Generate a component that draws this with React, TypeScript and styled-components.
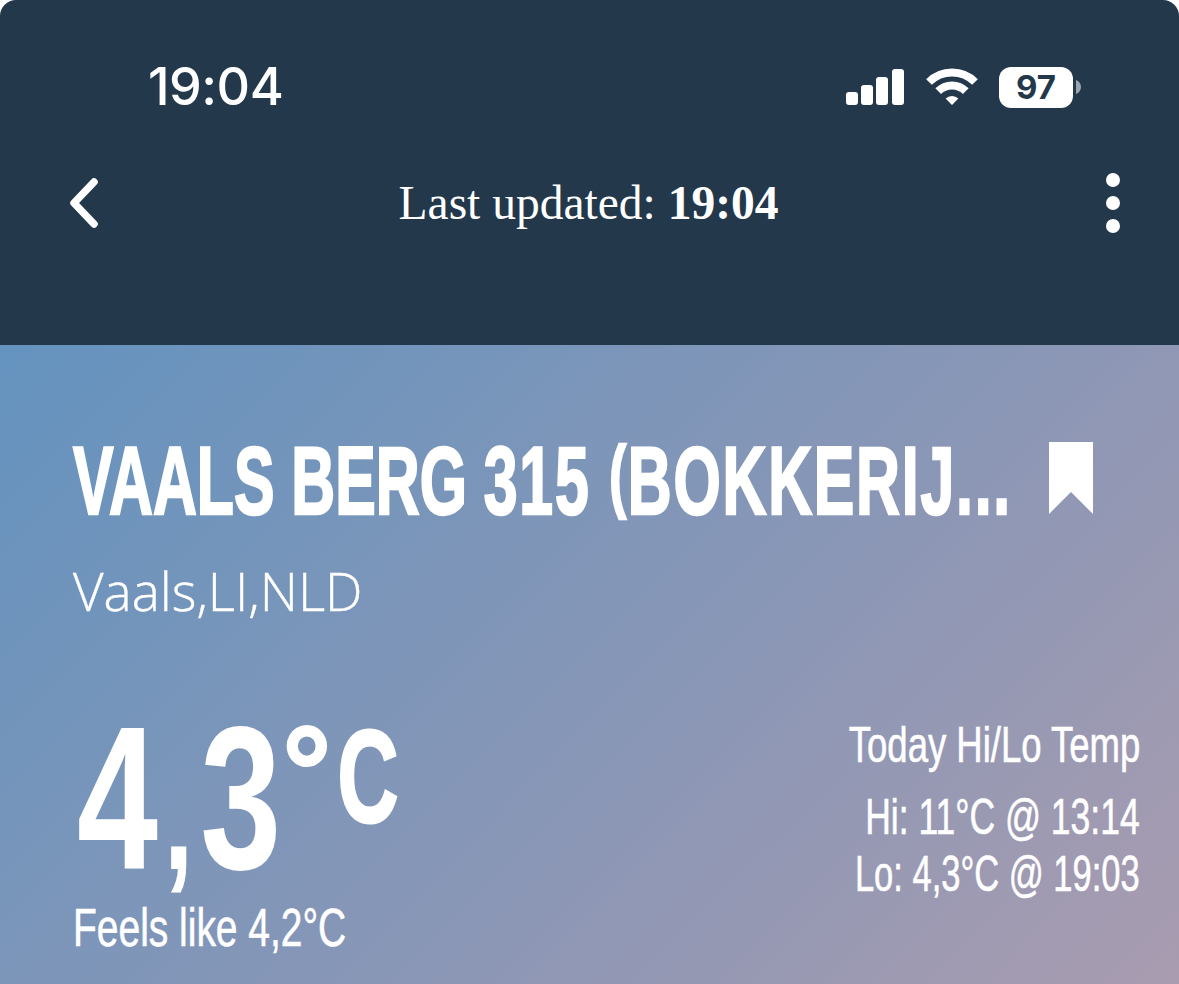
import React from "react";
import styled, { createGlobalStyle } from "styled-components";

const Global = createGlobalStyle`
  html, body { margin: 0; padding: 0; background: #fff; }
  #root { width: 1179px; height: 984px; overflow: hidden; }
`;
const Page = styled.div`
  width: 1179px; height: 984px; display: flex; flex-direction: column;
  border-radius: 16px 16px 0 0; overflow: hidden; color: #fff;
`;
const Header = styled.header`
  height: 345px; background: #23384b; display: flex; flex-direction: column; flex: none;
`;
const StatusBar = styled.div`
  height: 66px; padding: 54px 98px 0 148px; display: flex; justify-content: space-between; align-items: center;
`;
const Clock = styled.div`
  font: 500 52px/56px Inter, sans-serif; letter-spacing: -0.5px;
`;
const StatusIcons = styled.div`display: flex; align-items: center; gap: 21px;`;
const BatteryWrap = styled.div`display: flex; align-items: center; gap: 3px;`;
const Battery = styled.div`
  width: 74px; height: 41px; border-radius: 12px; background: #fff; color: #23384b;
  font: 700 33px/41px Inter, sans-serif; text-align: center;
`;
const Nav = styled.div`
  margin-top: 41px; height: 84px; padding: 0 58px 0 68px; display: flex; align-items: center; justify-content: space-between;
`;
const Updated = styled.div`
  font: 400 47.5px/50px "Liberation Serif", serif; margin-right: 28px;
  b { font-weight: 700; }
`;
const Main = styled.main`
  flex: 1; padding: 0 39px 0 73px; display: flex; flex-direction: column;
  background: linear-gradient(135deg, #6493bf 0%, #8d97b5 62%, #a99cb0 100%);
`;
const TitleRow = styled.div`
  margin-top: 91px; height: 84px; display: flex; align-items: center; justify-content: space-between; padding-right: 47px;
`;
const Title = styled.h1`
  margin: 0; flex: 1; min-width: 0; white-space: nowrap;
  font: 700 96px/84px "Liberation Sans", sans-serif;
  -webkit-text-stroke: 2.5px #fff;
  transform: scaleX(0.633); transform-origin: left center;
`;
const Spaced = styled.span`letter-spacing: 2.8px;`;
const Paren = styled.span`font-size: 80px; vertical-align: 12px;`;
const Location = styled.div`
  margin-top: 41px; font: 300 53px/60px "Open Sans", sans-serif;
  -webkit-text-stroke: 0.4px #fff;
`;
const Lower = styled.div`
  margin-top: 74px; display: flex; justify-content: space-between;
`;
const TempCol = styled.div`display: flex; flex-direction: column;`;
const Temp = styled.div`
  font: 700 205px/205px "Liberation Sans", sans-serif; display: flex;
  height: 205px; white-space: nowrap; margin-left: 4px;
  transform: scaleX(0.71); transform-origin: left center;
`;
const TempNumber = styled.span`display: block; height: 205px;`;
const Comma = styled.span`font-size: 150px; margin: 0 10px 0 8px;`;
const Degree = styled.span`
  font: 700 130px/130px "Liberation Sans", sans-serif; margin: 12px 0 0 1px;
  -webkit-text-stroke: 2px #fff;
  transform: scaleX(1.33); transform-origin: left center;
`;
const UnitC = styled.span`
  font: 700 132px/130px "Liberation Sans", sans-serif; margin: 17px 0 0 26px;
  -webkit-text-stroke: 3px #fff;
  transform: scaleX(0.9); transform-origin: left center;
`;
const Feels = styled.div`
  font: 400 53px/56px "Liberation Sans", sans-serif; white-space: nowrap;
  -webkit-text-stroke: 0.6px #fff;
  transform: scaleX(0.735); transform-origin: left center;
`;
const HiLo = styled.div`
  display: flex; flex-direction: column; align-items: flex-end; padding-top: 22px;
  font: 400 50px/57px "Liberation Sans", sans-serif; white-space: nowrap;
  -webkit-text-stroke: 0.6px #fff;
`;
const HiLoTitle = styled.div`
  margin-bottom: 15px; transform: scaleX(0.73); transform-origin: right center;
`;
const HiLoLine = styled.div<{ $squeeze: number }>`
  transform: scaleX(${(p) => p.$squeeze}); transform-origin: right center;
`;

export default function App() {
  return (
    <Page>
      <Global />
      <Header>
        <StatusBar>
          <Clock>19:04</Clock>
          <StatusIcons>
            <svg width="60" height="38" viewBox="0 0 60 38" fill="#fff">
              <rect x="1" y="24" width="12" height="13" rx="3" />
              <rect x="16" y="17" width="12" height="20" rx="3" />
              <rect x="31" y="9" width="12" height="28" rx="3" />
              <rect x="47" y="1" width="12" height="36" rx="3" />
            </svg>
            <svg width="52" height="38" viewBox="0 0 52 38">
              <path d="M26 37 19.6 30.6A9 9 0 0 1 32.4 30.6Z" fill="#fff" />
              <path d="M12.2 23.2A19.5 19.5 0 0 1 39.8 23.2" fill="none" stroke="#fff" strokeWidth="8" />
              <path d="M3 14A32.5 32.5 0 0 1 49 14" fill="none" stroke="#fff" strokeWidth="8" />
            </svg>
            <BatteryWrap>
              <Battery>97</Battery>
              <svg width="5" height="14" viewBox="0 0 5 14"><path d="M0 0c3 1 5 4 5 7s-2 6-5 7Z" fill="#9aa5af" /></svg>
            </BatteryWrap>
          </StatusIcons>
        </StatusBar>
        <Nav>
          <svg width="32" height="50" viewBox="0 0 32 50" fill="none" stroke="#fff" strokeWidth="7.5" strokeLinecap="round" strokeLinejoin="round"><path d="M26 4 6 25l20 21" /></svg>
          <Updated>Last updated: <b>19:04</b></Updated>
          <svg width="16" height="62" viewBox="0 0 16 62" fill="#fff"><circle cx="8" cy="8" r="7" /><circle cx="8" cy="31" r="7" /><circle cx="8" cy="54" r="7" /></svg>
        </Nav>
      </Header>
      <Main>
        <TitleRow>
          <Title>VAALS BERG <Spaced>315 <Paren>(</Paren>BOKKERIJ...</Spaced></Title>
          <svg width="44" height="72" viewBox="0 0 44 72" fill="#fff"><path d="M0 0h44v72L22 50 0 72Z" /></svg>
        </TitleRow>
        <Location>Vaals,LI,NLD</Location>
        <Lower>
          <TempCol>
            <Temp>
              <TempNumber>4<Comma>,</Comma>3</TempNumber>
              <Degree>°</Degree>
              <UnitC>C</UnitC>
            </Temp>
            <Feels>Feels like 4,2°C</Feels>
          </TempCol>
          <HiLo>
            <HiLoTitle>Today Hi/Lo Temp</HiLoTitle>
            <HiLoLine $squeeze={0.71}>Hi: 11°C @ 13:14</HiLoLine>
            <HiLoLine $squeeze={0.69}>Lo: 4,3°C @ 19:03</HiLoLine>
          </HiLo>
        </Lower>
      </Main>
    </Page>
  );
}
